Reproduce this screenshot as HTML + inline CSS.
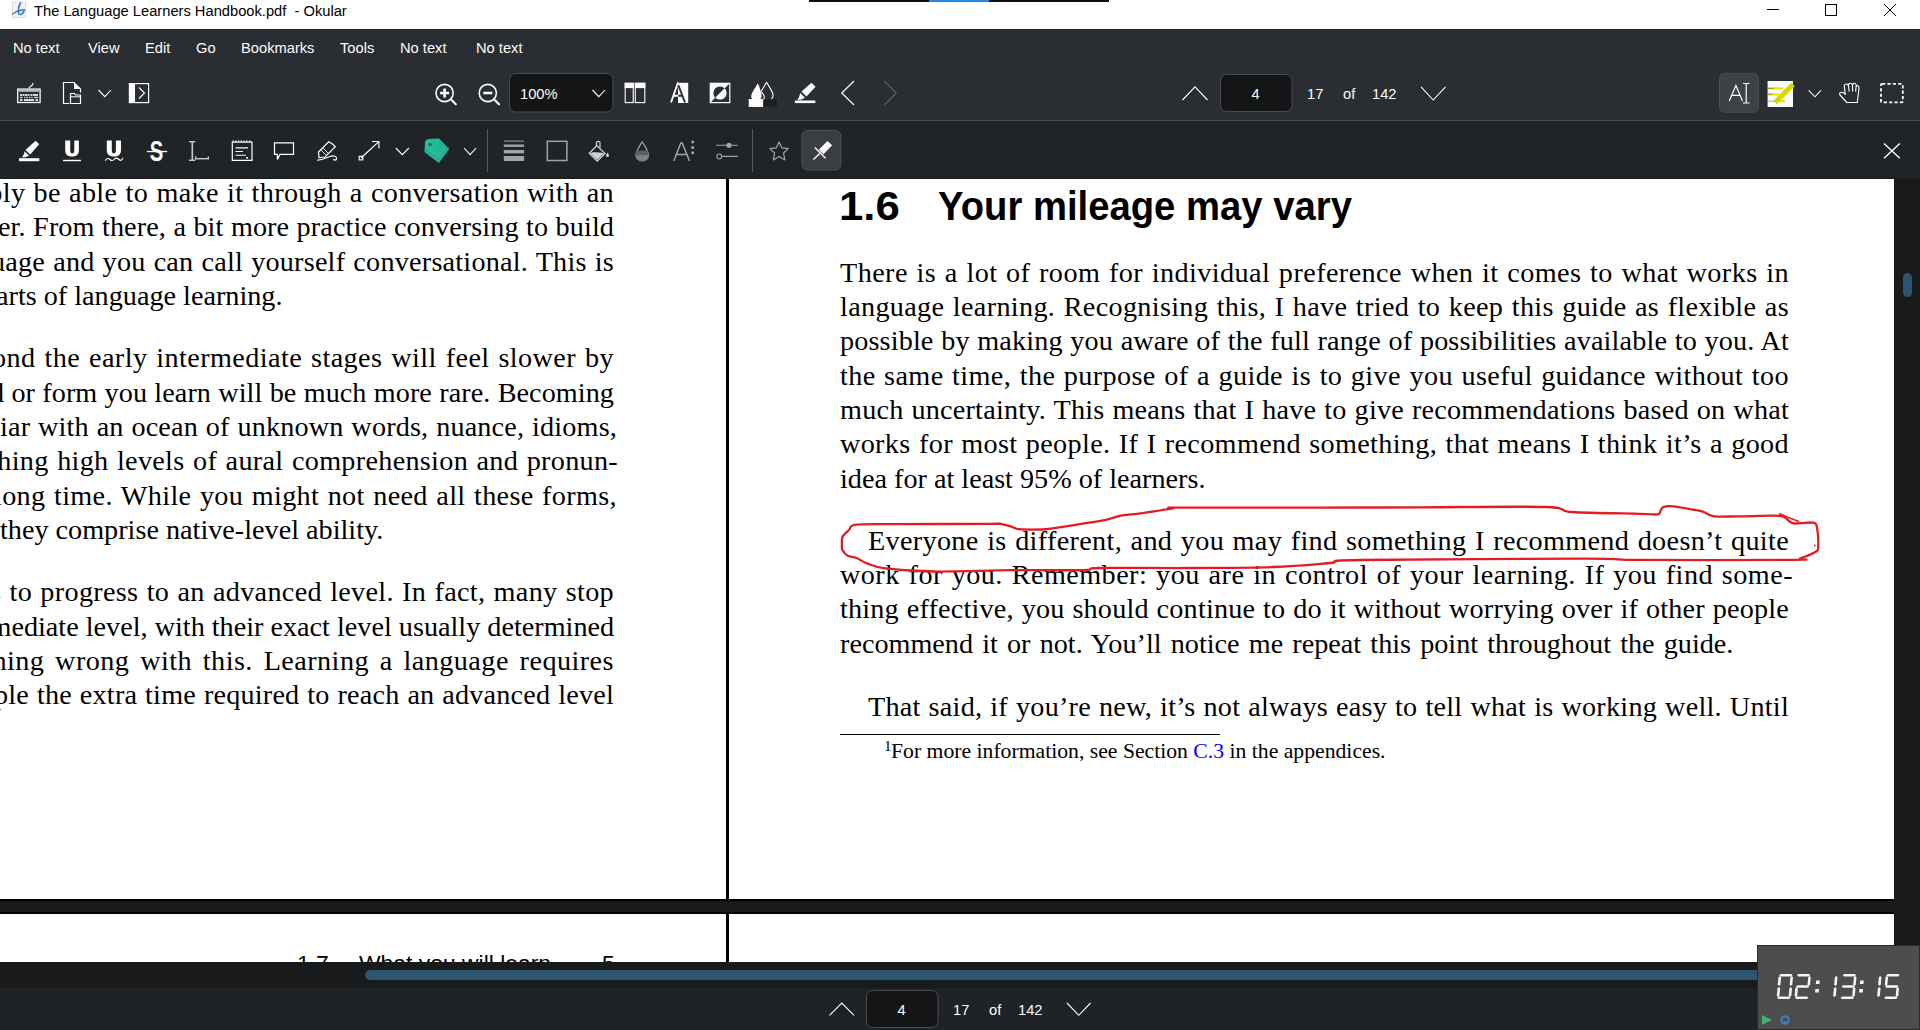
<!DOCTYPE html>
<html><head><meta charset="utf-8">
<style>
*{margin:0;padding:0;box-sizing:border-box}
html,body{width:1920px;height:1030px;overflow:hidden;background:#2a2d32;font-family:"Liberation Sans",sans-serif}
.a{position:absolute}
#title{left:0;top:0;width:1920px;height:29px;background:#fff}
#menu{left:0;top:29px;width:1920px;height:37px;background:#2a2d32}
#tb1{left:0;top:66px;width:1920px;height:54px;background:#2a2d32}
#sep1{left:0;top:120px;width:1920px;height:1px;background:#4b4e53}
#tb2{left:0;top:121px;width:1920px;height:57px;background:#212427}
#doc{left:0;top:178px;width:1920px;height:784px;background:#191a1c;overflow:hidden}
#hscroll{left:0;top:962px;width:1920px;height:26px;background:#191a1c}
#bbar{left:0;top:988px;width:1920px;height:42px;background:#202326}
.mi{position:absolute;top:30px;height:37px;line-height:37px;color:#fcfcfc;font-size:14.7px;white-space:pre}
.tt{position:absolute;color:#fcfcfc;font-size:14.7px;white-space:pre}
.serif{font-family:"Liberation Serif",serif;color:#000;white-space:pre}
.ln{position:absolute;font-family:"Liberation Serif",serif;font-size:28.2px;color:#000;white-space:nowrap;text-align:justify;text-align-last:justify;line-height:34px;height:34px}
.ll{position:absolute;font-family:"Liberation Serif",serif;font-size:28.2px;color:#000;white-space:nowrap;line-height:34px;height:34px}
svg{position:absolute;overflow:visible}
</style></head><body>
<div id="title" class="a"></div>
<div id="menu" class="a"></div>
<div id="tb1" class="a"></div>
<div id="sep1" class="a"></div>
<div id="tb2" class="a"></div>
<div id="doc" class="a"></div>
<div id="hscroll" class="a"></div>
<div id="bbar" class="a"></div>

<!-- title -->
<div class="a" style="left:809px;top:0;width:300px;height:2px;background:#111"></div>
<div class="a" style="left:929px;top:0;width:60px;height:2px;background:#1e88e5"></div>
<div class="a" style="left:34px;top:0.5px;height:29px;line-height:21px;font-size:14.7px;color:#000;white-space:pre">The Language Learners Handbook.pdf  - Okular</div>

<!-- menu -->
<div class="mi" style="left:13px">No text</div>
<div class="mi" style="left:88px">View</div>
<div class="mi" style="left:145px">Edit</div>
<div class="mi" style="left:196px">Go</div>
<div class="mi" style="left:241px">Bookmarks</div>
<div class="mi" style="left:340px">Tools</div>
<div class="mi" style="left:400px">No text</div>
<div class="mi" style="left:476px">No text</div>


<svg class="a" style="left:0;top:0" width="1920" height="180" viewBox="0 0 1920 180" fill="none">
<!-- title bar icon -->
<rect x="12.5" y="2" width="13" height="15.5" fill="#f4f4f4" stroke="#d8d8d8" stroke-width="0.8"/>
<path d="M20.8,2.5 C18.5,6 18,10 18.6,13.5 C19.5,15.5 22.5,14 24,11.5" stroke="#1e7fe8" stroke-width="1.6"/>
<path d="M12,15 C15,11.5 20,9.5 25.5,9.5 M12.5,13.8 C16,11 21,10 25,11" stroke="#3a6e92" stroke-width="1"/>
<!-- window buttons -->
<path d="M1767,9.5 H1779" stroke="#000" stroke-width="1"/>
<rect x="1825.5" y="4.5" width="11" height="11" stroke="#000" stroke-width="1"/>
<path d="M1884,4 L1896,16 M1896,4 L1884,16" stroke="#000" stroke-width="1"/>

<g stroke="#fcfcfc" fill="none">
<!-- keyboard -->
<rect x="17.7" y="89.1" width="22.4" height="13.4" stroke-width="1.3"/>
<rect x="18.4" y="89.8" width="21" height="2" fill="#b9bbbd" stroke="none"/>
<g fill="#d6d7d8" stroke="none">
<rect x="20" y="94" width="2" height="2"/><rect x="22.5" y="94" width="2" height="2"/><rect x="25" y="94" width="2" height="2"/><rect x="27.5" y="94" width="2" height="2"/><rect x="30.5" y="94" width="2" height="2"/><rect x="33" y="94" width="2" height="2"/><rect x="35" y="94" width="3" height="2"/>
<rect x="20" y="96.8" width="2.5" height="1.3"/><rect x="24" y="96.8" width="1.3" height="1.3"/><rect x="26.3" y="96.8" width="1.6" height="1.3"/><rect x="29" y="96.8" width="1.3" height="1.3"/><rect x="31.3" y="96.8" width="1.3" height="1.3"/><rect x="34" y="96.8" width="4" height="1.3"/>
<rect x="20" y="99" width="2.5" height="2"/><rect x="24" y="99" width="10" height="2"/><rect x="35.5" y="99" width="2.5" height="2"/>
</g>
<path d="M28.8,88.5 C28.8,86.5 32.8,86 32.8,84 V83" stroke-width="1.2"/>
<!-- document/open icon -->
<path d="M69.5,103.5 H63.5 V82.5 H74 L80.5,89 V92.5" stroke-width="1.2"/>
<path d="M74,82.5 L80.5,89 H74 Z" fill="#fcfcfc" stroke="none"/>
<path d="M70.5,103.5 V93.5 H74.5 L75.5,95 H80.5 V103.5 Z" stroke-width="1.2"/>
<path d="M70.5,96.8 H80.5" stroke-width="1"/>
<!-- chevron -->
<path d="M98.5,90 L104.8,96.7 L111,90" stroke-width="1.1"/>
<!-- sidebar -->
<rect x="129.4" y="83.6" width="19.2" height="19" stroke-width="1.2"/>
<rect x="129" y="83.2" width="6" height="19.8" fill="#fcfcfc" stroke="none"/>
<path d="M139,87.5 L144.5,93 L139,98.5" stroke-width="1.1"/>
<!-- zoom in -->
<circle cx="444.6" cy="93" r="8.6" stroke-width="1.6"/>
<path d="M450.8,99.2 L455.8,104.2" stroke-width="2.2" stroke-linecap="round"/>
<path d="M444.6,88.5 V97.5 M440.1,93 H449.1" stroke-width="2.6"/>
<!-- zoom out -->
<circle cx="487.8" cy="93" r="8.6" stroke-width="1.6"/>
<path d="M494,99.2 L499,104.2" stroke-width="2.2" stroke-linecap="round"/>
<path d="M483.3,93 H492.3" stroke-width="2.6"/>
</g>
<!-- combobox -->
<rect x="509.5" y="73.5" width="103.5" height="38.5" rx="6" fill="#141517" stroke="#4a4c50" stroke-width="1"/>
<path d="M592.5,90 L598.8,96.7 L605,90" stroke="#fcfcfc" stroke-width="1.1"/>

<g stroke="#fcfcfc" fill="none">
<!-- two pages -->
<rect x="625.2" y="83.3" width="8" height="19.3" stroke-width="1.1"/>
<rect x="635.3" y="83.3" width="9.5" height="19.3" stroke-width="1.1"/>
<rect x="624.7" y="82.8" width="9" height="5.3" fill="#fcfcfc" stroke="none"/>
<rect x="634.8" y="82.8" width="10.5" height="5.3" fill="#fcfcfc" stroke="none"/>
<!-- A inverted -->
<rect x="678" y="82.8" width="10.2" height="20.2" fill="#fcfcfc" stroke="none"/>
<path d="M671,102.5 L677.5,84 L685,102.5 M673.8,95.8 H682" stroke="#fcfcfc" stroke-width="1.9"/>
<path d="M678.3,85.2 L685,102.5 M678.3,95.8 H682" stroke="#2a2d32" stroke-width="1.9"/>
<!-- O slash -->
<rect x="710.3" y="83.3" width="19.5" height="19.3" stroke-width="1.2"/>
<path d="M710,83 H730 L710,103 Z" fill="#fcfcfc" stroke="none"/>
<path d="M715.33,97.67 A6.6,6.6 0 0 1 724.67,88.33 Z" fill="#2a2d32" stroke="none"/>
<path d="M715.33,97.67 A6.6,6.6 0 0 0 724.67,88.33 Z" fill="#fcfcfc" stroke="none"/>
<!-- drops -->
<path d="M757.8,83.2 C755.5,87.5 751.2,93 751.2,96.5 C751.2,98.2 752,99.3 753.2,99.3 L759.8,99.3 C761,98.8 761.6,97.6 761.6,96 C761.6,93 760,88 757.8,83.2 Z" fill="#fcfcfc" stroke="none"/>
<path d="M766.6,82.2 C769.3,87 773.1,92 773.1,95.5 C773.1,97.2 772.2,98.3 771.2,98.8 M766.6,82.2 C764.8,85.5 762.8,88.5 761.3,91.3 M761.3,91.8 C763,93.5 764.3,95.5 764.3,97.3 C764.3,98.2 764,98.8 763.3,99.2" stroke="#fcfcfc" stroke-width="1.1" fill="none"/>
<rect x="748.7" y="99" width="14.4" height="8" fill="#fcfcfc" stroke="none"/>
<rect x="764" y="99.3" width="13" height="7.2" fill="#1e1e1e" stroke="none"/>
<!-- highlighter -->
<path d="M811.5,82.8 L815.5,86.7 L806.5,96.5 L801.5,91.5 Z" fill="#fcfcfc" stroke="none"/>
<path d="M800.3,93 L805,97.8 L801,99.8 L797.5,100 L799,97 Z" fill="#fcfcfc" stroke="none"/>
<rect x="794.8" y="100.5" width="20.5" height="2.6" fill="#fcfcfc" stroke="none"/>
<!-- prev/next -->
<path d="M854,81 L841.8,93 L854,105" stroke-width="1.2"/>
<path d="M884.3,81 L896.3,93 L884.3,105" stroke="#5c5f63" stroke-width="1.2"/>
<!-- up / down -->
<path d="M1182.5,100 L1195,86.8 L1207.5,100" stroke-width="1.1"/>
<path d="M1421,86.8 L1433.2,100 L1445.5,86.8" stroke-width="1.1"/>
</g>
<rect x="1220.5" y="74.5" width="71.5" height="37" rx="6" fill="#141517" stroke="#4a4c50" stroke-width="1"/>
<!-- AI button -->
<rect x="1719.5" y="73.3" width="39" height="39" rx="5" fill="#3e4146" stroke="#4b4e53" stroke-width="1"/>
<path d="M1729.3,101 L1735.9,85.5 L1742.5,101 M1731.8,95.3 H1740" stroke="#fcfcfc" stroke-width="1.2"/>
<path d="M1743,83.5 H1749.5 M1746.2,83.5 V103 M1743,103 H1749.5" stroke="#fcfcfc" stroke-width="1.2"/>
<!-- yellow note -->
<rect x="1767.6" y="81" width="25.4" height="26" fill="#fcfcfc"/>
<path d="M1768,88.4 H1783 M1768,94.3 H1779 M1777,101.2 H1785" stroke="#e6e600" stroke-width="2.3"/>
<path d="M1768,88.4 H1774 M1768,94.3 H1772 M1768,101.2 H1775" stroke="#777" stroke-width="0.7"/>
<path d="M1793,84.5 L1775,102.5" stroke="#d8d800" stroke-width="5"/>
<!-- chevron -->
<path d="M1808.7,90.3 L1814.9,96.8 L1821,90.3" stroke="#fcfcfc" stroke-width="1.1"/>
<!-- hand -->
<path d="M1846.8,102.5 L1840,95 C1839.2,94 1839.5,92.5 1841,92.3 C1842.5,92 1844,93 1845.3,94.3 L1844.3,86.5 C1844,84.8 1845.2,84 1846.5,84 C1847.8,84 1848.3,85 1848.5,86 M1848.3,85.3 C1848.3,83.9 1849.3,83.2 1850.5,83.2 C1851.8,83.2 1852.5,84 1852.5,85.2 C1852.6,83.9 1853.7,83.2 1854.7,83.3 C1856,83.5 1856.2,84.5 1856.2,86 C1856.5,85.6 1857.3,85.5 1858,85.8 C1859,86.3 1859.1,87.4 1858.9,89 L1857.3,102.5 H1846.8 M1848.5,86 L1849.2,91.6 M1852.5,85.2 L1852.6,91.6 M1856.2,86 L1855.6,91.6" stroke="#fcfcfc" stroke-width="1.15" fill="none" stroke-linejoin="round"/>
<!-- dashed rect -->
<rect x="1881" y="83.8" width="21.8" height="18.5" stroke="#fcfcfc" stroke-width="1.8" stroke-dasharray="3.2,2.2" rx="1"/>

<!-- toolbar 2 -->
<g fill="#fcfcfc" stroke="none">
<path d="M35.6,140.8 L39.2,144.2 L30.2,154.6 L25.5,150 Z"/>
<path d="M24.5,151.2 L29.2,155.8 L25,157.2 L22,157.3 L24,154 Z"/>
<rect x="19" y="158.2" width="20.3" height="3"/>
</g>
<!-- U -->
<path d="M65.2,140.6 H70.2 V150 C70.2,152.5 71,153.5 72.2,153.5 C73.5,153.5 74.3,152.5 74.3,150 V140.6 H78.9 V150 C78.9,154.5 76.5,156.5 72,156.5 C67.5,156.5 65.2,154.5 65.2,150 Z" fill="#fcfcfc"/>
<rect x="63" y="159.8" width="18" height="1.4" fill="#fcfcfc"/>
<path d="M106.8,140.6 H111.8 V150 C111.8,152.5 112.6,153.5 113.8,153.5 C115.1,153.5 115.9,152.5 115.9,150 V140.6 H121 V150 C121,154.5 118.5,156.5 114,156.5 C109.5,156.5 106.8,154.5 106.8,150 Z" fill="#fcfcfc"/>
<path d="M105.2,160.6 C107,158 108.5,158 110,159.5 C111.5,161 113,161 114.5,159 C116,157.5 117.5,158 119,159.5 C120.5,161 121.5,160.5 123,158" stroke="#fcfcfc" stroke-width="1.1"/>
<!-- S strike -->
<text x="0" y="0" text-anchor="middle" font-family="Liberation Sans" font-weight="bold" font-size="29" fill="#fcfcfc" transform="translate(156.4,160.8) scale(0.7,1)">S</text>
<rect x="146.8" y="150.9" width="20.4" height="1.3" fill="#fcfcfc"/>
<rect x="149" y="149" width="15" height="5" fill="#212427" opacity="0"/>
<!-- bracket -->
<g fill="#c8c9ca">
<rect x="189" y="141" width="6.2" height="1.4"/><rect x="191.5" y="141" width="1.6" height="20"/><rect x="189" y="159.6" width="6.2" height="1.4"/>
<rect x="195" y="158" width="14" height="1.4"/><rect x="195" y="156.3" width="1.3" height="3"/><rect x="207.7" y="156.3" width="1.3" height="3"/>
</g>
<!-- note -->
<g stroke="#fcfcfc" fill="none">
<path d="M232.3,142.2 V160.3 H252 V142.2 Z" stroke-width="1.2"/>
<path d="M232.3,141.2 H252" stroke-width="1.3" stroke-dasharray="1.3,1.5"/>
<path d="M235.5,147.9 H248 M235.5,151.5 H243 M235.5,155.3 H246" stroke-width="1.1"/>
<rect x="246" y="157" width="2" height="1.5" fill="#fcfcfc" stroke="none"/>
<!-- bubble -->
<path d="M274.5,142.8 H293.5 V154.4 H280 L277.4,159.4 V154.4 H274.5 Z" stroke-width="1.2"/>
<!-- pencil -->
<path d="M332.5,144 L335.3,146.8 L325,157 L319,157.5 L318.5,152 L328.7,141.8 Z" stroke-width="1.2"/>
<path d="M321,150 L326.8,155.8 M323,148 L328.8,153.8" stroke-width="0.9"/>
<path d="M317,160.2 C321,160 325,158.5 330,156.5 C334,155 337,156.5 336.5,159 C336,160.5 334,160.5 333.5,159" stroke-width="1.1"/>
<!-- arrow -->
<path d="M361,158 L378.8,141.6 M372,141.5 H378.9 V148.3" stroke-width="1.2"/>
<rect x="359.2" y="156.3" width="3.6" height="3.6" stroke-width="1.1"/>
<!-- chevrons -->
<path d="M395.8,148 L402.3,154.6 L408.9,148" stroke-width="1.1"/>
<path d="M464,148 L470.1,154.6 L476.2,148" stroke-width="1.1"/>
<!-- X -->
<path d="M1884,143.5 L1899.8,158.2 M1899.8,143.5 L1884,158.2" stroke-width="1.4"/>
</g>
<!-- tag -->
<path d="M427.5,139 L439,138.5 L449.2,149 L438.8,163 L424.5,152 L425,141.5 Z" fill="#27b99a"/>
<path d="M424.8,149 L438.8,160 L448.5,147" stroke="#1f9e83" stroke-width="1" fill="none"/>
<circle cx="430.2" cy="144.6" r="1.7" fill="#1a6f5d"/>
<path d="M436,147.5 L441.5,151.5 M437.5,145 L443,149 M439,142.5 L444.5,146.5" stroke="#1f9e83" stroke-width="0.9"/>
<!-- separators -->
<rect x="487" y="129" width="1" height="43" fill="#55585c"/>
<rect x="752" y="129" width="1" height="43" fill="#55585c"/>
<!-- gray icons -->
<g fill="#a3a4a6">
<rect x="503.8" y="140.6" width="20.3" height="1"/>
<rect x="503.8" y="144.5" width="20.3" height="2.4"/>
<rect x="503.8" y="150" width="20.3" height="3.4"/>
<rect x="503.8" y="156" width="20.3" height="5"/>
</g>
<rect x="547.3" y="141.3" width="19.6" height="19.2" stroke="#a3a4a6" stroke-width="1.5" fill="none"/>
<!-- bucket -->
<path d="M596.8,145.6 L605,153.5 L597.2,161 L589.3,153.2 Z" stroke="#d0d1d2" stroke-width="1.3" fill="none"/>
<path d="M590.5,153.2 C593,151.5 598,152.5 603.8,153.2 L597.2,159.7 Z" fill="#d0d1d2"/>
<path d="M596.5,146.5 V142.5 C596.5,141 600,141 600,142.5 V148" stroke="#d0d1d2" stroke-width="1.2" fill="none"/>
<path d="M607.5,152.5 C606.5,154 606,155 606,156 C606,157.2 609,157.2 609,156 C609,155 608.5,154 607.5,152.5 Z" fill="#d0d1d2"/>
<!-- drop -->
<path d="M642.2,141.8 C639,147 636,151 636,155 C636,158.8 638.8,160.8 642.2,160.8 C645.6,160.8 648.4,158.8 648.4,155 C648.4,151 645.4,147 642.2,141.8 Z" stroke="#a3a4a6" stroke-width="1.2" fill="none"/>
<path d="M636.6,150.5 H647.8 C648.2,152 648.4,153.5 648.4,155 C648.4,158.8 645.6,160.8 642.2,160.8 C638.8,160.8 636,158.8 636,155 C636,153.5 636.2,152 636.6,150.5 Z" fill="#5b5d60"/>
<path d="M636,155 H648.4 C648.4,158.8 645.6,160.8 642.2,160.8 C638.8,160.8 636,158.8 636,155 Z" fill="#7f8184"/>
<!-- A dots -->
<path d="M673.8,161 L680.8,143 L682.2,143 L689.5,161 M676.3,154.5 H687" stroke="#a3a4a6" stroke-width="1.5" fill="none"/>
<circle cx="692.7" cy="142" r="1.5" fill="#a3a4a6"/><circle cx="692.7" cy="147.6" r="1.5" fill="#a3a4a6"/><circle cx="692.7" cy="152.8" r="1.5" fill="#a3a4a6"/>
<!-- sliders -->
<path d="M716,145.3 H737.8 M722,156.4 H737.8" stroke="#a3a4a6" stroke-width="1.1"/>
<circle cx="729" cy="145.3" r="2.6" fill="#a3a4a6"/>
<circle cx="719.3" cy="156.4" r="2.4" stroke="#a3a4a6" stroke-width="1.1" fill="none"/>
<!-- star -->
<path d="M779.1,142 L781.9,147.9 L788.3,148.6 L783.6,153 L784.8,159.9 L779.1,156.6 L773.4,159.9 L774.6,153 L769.9,148.6 L776.3,147.9 Z" stroke="#a3a4a6" stroke-width="1.2" fill="none" stroke-linejoin="round"/>
<!-- pin button -->
<rect x="801.9" y="130.5" width="39" height="39.5" rx="5.5" fill="#3a3d41" stroke="#4d5054" stroke-width="1"/>
<path d="M827.4,141 L832.1,145.3 L823.5,154.3 L818.8,149.8 Z" fill="#fcfcfc"/>
<path d="M814.8,147.6 L825.6,158.2 M819.8,153.5 L813.4,159.5" stroke="#fcfcfc" stroke-width="1.4"/>
</svg>

<!-- toolbar texts -->
<div class="tt" style="left:520px;top:84.5px;line-height:18px">100%</div>
<div class="tt" style="left:1251.5px;top:85px;line-height:18px">4</div>
<div class="tt" style="left:1307px;top:85px;line-height:18px">17</div>
<div class="tt" style="left:1343px;top:85px;line-height:18px">of</div>
<div class="tt" style="left:1372px;top:85px;line-height:18px">142</div>

<!-- document -->
<div class="a" style="left:0;top:178px;width:1920px;height:784px;overflow:hidden;background:#191a1c">
<div class="a" style="left:0;top:-178px;width:1920px;height:1030px">
<div class="a" style="left:0;top:179px;width:726px;height:720px;background:#fff"></div>
<div class="a" style="left:729px;top:179px;width:1165px;height:720px;background:#fff"></div>
<div class="a" style="left:726px;top:178px;width:3px;height:721px;background:#000"></div>
<div class="a" style="left:0;top:899px;width:1894px;height:2px;background:#000"></div>
<div class="a" style="left:0;top:912px;width:1894px;height:2px;background:#000"></div>
<div class="a" style="left:0;top:914px;width:726px;height:60px;background:#fff"></div>
<div class="a" style="left:729px;top:914px;width:1165px;height:60px;background:#fff"></div>
<div class="a" style="left:726px;top:914px;width:3px;height:60px;background:#000"></div>
<div class="a" style="left:1903px;top:273px;width:9px;height:24px;border-radius:5px;background:#2b566f"></div>
<div class="a" style="left:0;top:0;width:726px;height:899px;overflow:hidden">
<div class="ln" style="left:-11.7px;top:176.0px;width:625.7px;letter-spacing:0.320px">bly be able to make it through a conversation with an</div>
<div class="ln" style="left:-2px;top:210.3px;width:616px;letter-spacing:0.092px">er. From there, a bit more practice conversing to build</div>
<div class="ln" style="left:-9px;top:244.7px;width:623.0px;letter-spacing:0.222px">uage and you can call yourself conversational. This is</div>
<div class="ll" style="left:-4px;top:279.0px">arts of language learning.</div>
<div class="ln" style="left:-8px;top:341.3px;width:622.0px;letter-spacing:0.410px">ond the early intermediate stages will feel slower by</div>
<div class="ln" style="left:-10px;top:375.6px;width:624px;letter-spacing:0.061px">d or form you learn will be much more rare. Becoming</div>
<div class="ln" style="left:-8px;top:410.0px;width:625.0px;letter-spacing:0.170px">liar with an ocean of unknown words, nuance, idioms,</div>
<div class="ln" style="left:-2.7px;top:444.3px;width:620.7px;letter-spacing:0.299px">hing high levels of aural comprehension and pronun-</div>
<div class="ln" style="left:-6px;top:478.6px;width:623.0px;letter-spacing:0.347px">long time. While you might not need all these forms,</div>
<div class="ll" style="left:0px;top:513.0px">they comprise native-level ability.</div>
<div class="ln" style="left:-10px;top:575.3px;width:624.0px;letter-spacing:0.313px">s to progress to an advanced level. In fact, many stop</div>
<div class="ln" style="left:-10.5px;top:609.6px;width:624.5px;letter-spacing:0.000px">mediate level, with their exact level usually determined</div>
<div class="ln" style="left:-7.6px;top:644.0px;width:621.6px;letter-spacing:0.450px">hing wrong with this.  Learning a language requires</div>
<div class="ln" style="left:-6px;top:678.3px;width:620.0px;letter-spacing:0.200px">ple the extra time required to reach an advanced level</div>
</div>
<div class="ln" style="left:840px;top:255.5px;width:949px;letter-spacing:0.421px">There is a lot of room for individual preference when it comes to what works in</div>
<div class="ln" style="left:840px;top:289.8px;width:949px;letter-spacing:0.327px">language learning. Recognising this, I have tried to keep this guide as flexible as</div>
<div class="ln" style="left:840px;top:324.2px;width:949px;letter-spacing:0.141px">possible by making you aware of the full range of possibilities available to you. At</div>
<div class="ln" style="left:840px;top:358.5px;width:949px;letter-spacing:0.383px">the same time, the purpose of a guide is to give you useful guidance without too</div>
<div class="ln" style="left:840px;top:392.8px;width:949px;letter-spacing:0.211px">much uncertainty. This means that I have to give recommendations based on what</div>
<div class="ln" style="left:840px;top:427.2px;width:949px;letter-spacing:0.337px">works for most people. If I recommend something, that means I think it’s a good</div>
<div class="ll" style="left:840px;top:461.5px">idea for at least 95% of learners.</div>
<div class="ln" style="left:868px;top:523.8px;width:921px;letter-spacing:0.325px">Everyone is different, and you may find something I recommend doesn’t quite</div>
<div class="ln" style="left:840px;top:558.1px;width:953px;letter-spacing:0.450px">work for you. Remember: you are in control of your learning. If you find some-</div>
<div class="ln" style="left:840px;top:592.4px;width:949px;letter-spacing:0.190px">thing effective, you should continue to do it without worrying over if other people</div>
<div class="ll" style="left:840px;top:626.7px;word-spacing:2.1px">recommend it or not. You’ll notice me repeat this point throughout the guide.</div>
<div class="ln" style="left:868px;top:690.2px;width:921px;letter-spacing:0.241px">That said, if you’re new, it’s not always easy to tell what is working well. Until</div>
<div class="a" style="left:838.5px;top:183.5px;font-family:'Liberation Sans',sans-serif;font-weight:bold;font-size:41px;line-height:44px;white-space:pre;color:#000;transform:scaleX(1.065);transform-origin:0 0">1.6</div>
<div class="a" style="left:938px;top:183.5px;font-family:'Liberation Sans',sans-serif;font-weight:bold;font-size:41px;line-height:44px;white-space:pre;color:#000;transform:scaleX(0.933);transform-origin:0 0">Your mileage may vary</div>
<div class="a" style="left:840px;top:734px;width:380px;height:1px;background:#000"></div>
<div class="a" style="left:884px;top:737.5px;font-family:'Liberation Serif',serif;font-size:15px;line-height:16px;color:#000">1</div>
<div class="a" style="left:891px;top:738px;font-family:'Liberation Serif',serif;font-size:21.7px;line-height:26px;white-space:pre;color:#000">For more information, see Section <span style="color:#0000ff">C.3</span> in the appendices.</div>
<div class="a" style="left:297px;top:949px;font-family:'Liberation Sans',sans-serif;font-size:22.9px;line-height:28px;white-space:pre;color:#000">1.7</div>
<div class="a" style="left:359px;top:949px;font-family:'Liberation Sans',sans-serif;font-size:22.9px;line-height:28px;white-space:pre;color:#000">What you will learn</div>
<div class="a" style="left:602px;top:949px;font-family:'Liberation Sans',sans-serif;font-size:22.9px;line-height:28px;white-space:pre;color:#000">5</div>
</div>
</div>


<!-- red ink annotation -->
<svg class="a" style="left:0;top:0" width="1920" height="1030" viewBox="0 0 1920 1030" fill="none">
<path d="M1786.5,518.8 C1785.2,518.3 1786.5,516.2 1778.6,515.8 C1770.7,515.4 1749.7,516.2 1739.0,516.3 C1728.3,516.4 1720.2,517.0 1714.3,516.3 C1708.4,515.6 1706.7,513.0 1703.4,511.9 C1700.1,510.8 1699.6,510.8 1694.5,509.9 C1689.4,509.0 1677.8,506.9 1672.7,506.4 C1667.6,505.9 1665.8,506.3 1663.8,506.9 C1661.8,507.5 1661.8,508.7 1660.8,509.9 C1659.8,511.1 1661.3,513.6 1657.8,514.3 C1654.3,514.9 1654.3,514.2 1640.0,513.8 C1625.7,513.4 1587.7,513.1 1572.0,512.0 C1556.3,510.9 1571.3,507.8 1546.0,507.0 C1520.7,506.2 1457.7,507.2 1420.0,507.3 C1382.3,507.4 1360.1,507.6 1320.0,507.7 C1279.9,507.8 1204.2,507.5 1179.6,507.6 C1155.0,507.8 1178.7,507.7 1172.3,508.6 C1165.9,509.6 1149.3,512.2 1141.0,513.3 C1132.7,514.4 1128.4,514.3 1122.3,515.4 C1116.2,516.5 1111.9,518.6 1104.6,520.1 C1097.3,521.6 1087.2,522.9 1078.5,524.3 C1069.8,525.7 1058.6,527.5 1052.5,528.4 C1046.4,529.3 1047.6,529.4 1042.0,529.5 C1036.4,529.6 1024.2,529.7 1019.0,529.2 C1013.8,528.7 1013.9,527.3 1010.8,526.4 C1007.7,525.5 1003.9,524.2 1000.4,523.8 C996.9,523.3 1006.7,523.7 990.0,523.8 C973.3,523.8 922.2,524.1 900.0,524.2 C877.8,524.3 865.1,523.6 856.6,524.6 C848.1,525.6 851.3,528.0 849.0,530.0 C846.7,532.0 843.8,534.3 842.6,536.6 C841.4,538.9 842.0,541.8 842.0,544.0 C842.0,546.2 841.4,548.0 842.4,550.0 C843.4,552.0 845.4,554.5 847.8,555.8 C850.2,557.1 853.4,556.7 856.6,558.0 C859.8,559.3 862.3,561.7 867.0,563.4 C871.7,565.1 873.8,566.9 885.0,568.3 C896.2,569.6 912.8,571.2 934.0,571.5 C955.2,571.8 987.0,570.4 1012.0,570.2 C1037.0,570.0 1069.2,570.5 1083.8,570.1 C1098.3,569.7 1081.7,568.4 1099.4,568.0 C1117.1,567.6 1161.1,568.2 1190.0,568.0 C1218.9,567.8 1249.7,567.8 1273.0,567.0 C1296.3,566.2 1315.5,564.2 1330.0,563.0 C1344.5,561.8 1317.5,560.7 1360.0,560.0 C1402.5,559.3 1538.3,558.7 1585.0,558.7 C1631.7,558.7 1605.2,559.7 1640.0,559.9 C1674.8,560.1 1766.8,560.1 1793.5,559.9 C1820.2,559.6 1796.6,559.8 1800.4,558.4 C1804.2,557.0 1813.2,553.6 1816.2,551.5 C1819.2,549.4 1818.0,549.3 1818.2,545.5 C1818.4,541.7 1817.9,532.5 1817.2,528.7 C1816.5,524.9 1817.1,523.7 1814.3,522.8 C1811.5,521.9 1804.0,523.1 1800.4,523.2 C1796.8,523.3 1794.8,523.9 1792.5,523.2 C1790.2,522.5 1787.5,519.5 1786.5,518.8" stroke="#e31c23" stroke-width="2.3" stroke-linecap="round" stroke-linejoin="round"/>
<path d="M1779.6,513.8 C1785,516 1792,519 1798.4,521.3" stroke="#e31c23" stroke-width="1.6" stroke-linecap="round"/>
<circle cx="1814.8" cy="545.5" r="0.9" fill="#e31c23"/>
</svg>
<!-- horizontal scrollbar -->
<div class="a" style="left:365px;top:970px;width:1420px;height:10px;border-radius:5px;background:#2c5570"></div>
<!-- bottom page nav -->
<svg class="a" style="left:0;top:980px" width="1920" height="50" viewBox="0 980 1920 50" fill="none">
<path d="M829.5,1015.3 L841.8,1003 L854,1015.3" stroke="#fcfcfc" stroke-width="1.1"/>
<rect x="866.5" y="990.5" width="71.5" height="37" rx="6" fill="#141517" stroke="#4a4c50" stroke-width="1"/>
<path d="M1067,1003 L1078.8,1015.3 L1090.5,1003" stroke="#fcfcfc" stroke-width="1.1"/>
</svg>
<div class="tt" style="left:897.5px;top:1000.5px;line-height:18px">4</div>
<div class="tt" style="left:953px;top:1000.5px;line-height:18px">17</div>
<div class="tt" style="left:989px;top:1000.5px;line-height:18px">of</div>
<div class="tt" style="left:1018px;top:1000.5px;line-height:18px">142</div>
<!-- timer overlay -->
<div class="a" style="left:1757px;top:945px;width:163px;height:85px;background:#4d4d4d;border:1px solid #2a2a2a"></div>
<svg class="a" style="left:1757px;top:945px" width="163" height="85" viewBox="1757 945 163 85">
<path d="M1762,1015 L1772,1020 L1762,1025 Z" fill="#3cb371"/>
<circle cx="1785" cy="1020" r="3.8" stroke="#3a7fd0" stroke-width="2" fill="none"/>
<path d="M1783,1021 L1785,1025 L1787,1021" fill="#3a7fd0"/>
<g fill="#f6f6f6"><polygon points="1779.2,975.3 1780.6,974.0 1791.4,974.0 1792.5,975.3 1791.1,976.6 1780.4,976.6"/><polygon points="1791.8,975.9 1793.0,977.2 1792.3,984.6 1790.9,985.9 1789.7,984.6 1790.4,977.2"/><polygon points="1790.8,987.1 1792.0,988.4 1791.3,995.8 1789.9,997.1 1788.7,995.8 1789.4,988.4"/><polygon points="1777.2,997.7 1778.6,996.4 1789.3,996.4 1790.5,997.7 1789.1,999.0 1778.4,999.0"/><polygon points="1778.9,987.1 1780.1,988.4 1779.4,995.8 1778.0,997.1 1776.8,995.8 1777.5,988.4"/><polygon points="1779.9,975.9 1781.1,977.2 1780.4,984.6 1779.0,985.9 1777.8,984.6 1778.5,977.2"/><polygon points="1797.0,975.3 1798.4,974.0 1809.2,974.0 1810.3,975.3 1808.9,976.6 1798.2,976.6"/><polygon points="1809.6,975.9 1810.8,977.2 1810.1,984.6 1808.7,985.9 1807.5,984.6 1808.2,977.2"/><polygon points="1796.0,986.5 1797.4,985.2 1808.1,985.2 1809.3,986.5 1807.9,987.8 1797.2,987.8"/><polygon points="1796.7,987.1 1797.9,988.4 1797.2,995.8 1795.8,997.1 1794.6,995.8 1795.3,988.4"/><polygon points="1795.0,997.7 1796.4,996.4 1807.1,996.4 1808.3,997.7 1806.9,999.0 1796.2,999.0"/><polygon points="1836.3,975.9 1837.5,977.2 1836.8,984.6 1835.4,985.9 1834.2,984.6 1834.9,977.2"/><polygon points="1835.3,987.1 1836.5,988.4 1835.8,995.8 1834.4,997.1 1833.2,995.8 1833.9,988.4"/><polygon points="1842.7,975.3 1844.1,974.0 1854.9,974.0 1856.0,975.3 1854.6,976.6 1843.9,976.6"/><polygon points="1855.3,975.9 1856.5,977.2 1855.8,984.6 1854.4,985.9 1853.2,984.6 1853.9,977.2"/><polygon points="1841.7,986.5 1843.1,985.2 1853.8,985.2 1855.0,986.5 1853.6,987.8 1842.9,987.8"/><polygon points="1854.3,987.1 1855.5,988.4 1854.8,995.8 1853.4,997.1 1852.2,995.8 1852.9,988.4"/><polygon points="1840.7,997.7 1842.1,996.4 1852.8,996.4 1854.0,997.7 1852.6,999.0 1841.9,999.0"/><polygon points="1880.3,975.9 1881.5,977.2 1880.8,984.6 1879.4,985.9 1878.2,984.6 1878.9,977.2"/><polygon points="1879.3,987.1 1880.5,988.4 1879.8,995.8 1878.4,997.1 1877.2,995.8 1877.9,988.4"/><polygon points="1886.2,975.3 1887.6,974.0 1898.4,974.0 1899.5,975.3 1898.1,976.6 1887.4,976.6"/><polygon points="1886.9,975.9 1888.1,977.2 1887.4,984.6 1886.0,985.9 1884.8,984.6 1885.5,977.2"/><polygon points="1885.2,986.5 1886.6,985.2 1897.3,985.2 1898.5,986.5 1897.1,987.8 1886.4,987.8"/><polygon points="1897.8,987.1 1899.0,988.4 1898.3,995.8 1896.9,997.1 1895.7,995.8 1896.4,988.4"/><polygon points="1884.2,997.7 1885.6,996.4 1896.3,996.4 1897.5,997.7 1896.1,999.0 1885.4,999.0"/><polygon points="1816.2,980.4 1819.8,980.4 1819.4,984.0 1815.8,984.0"/><polygon points="1815.4,989.0 1819.0,989.0 1818.7,992.6 1815.1,992.6"/><polygon points="1860.2,980.4 1863.8,980.4 1863.4,984.0 1859.8,984.0"/><polygon points="1859.4,989.0 1863.0,989.0 1862.7,992.6 1859.1,992.6"/></g>
</svg>


</body></html>
